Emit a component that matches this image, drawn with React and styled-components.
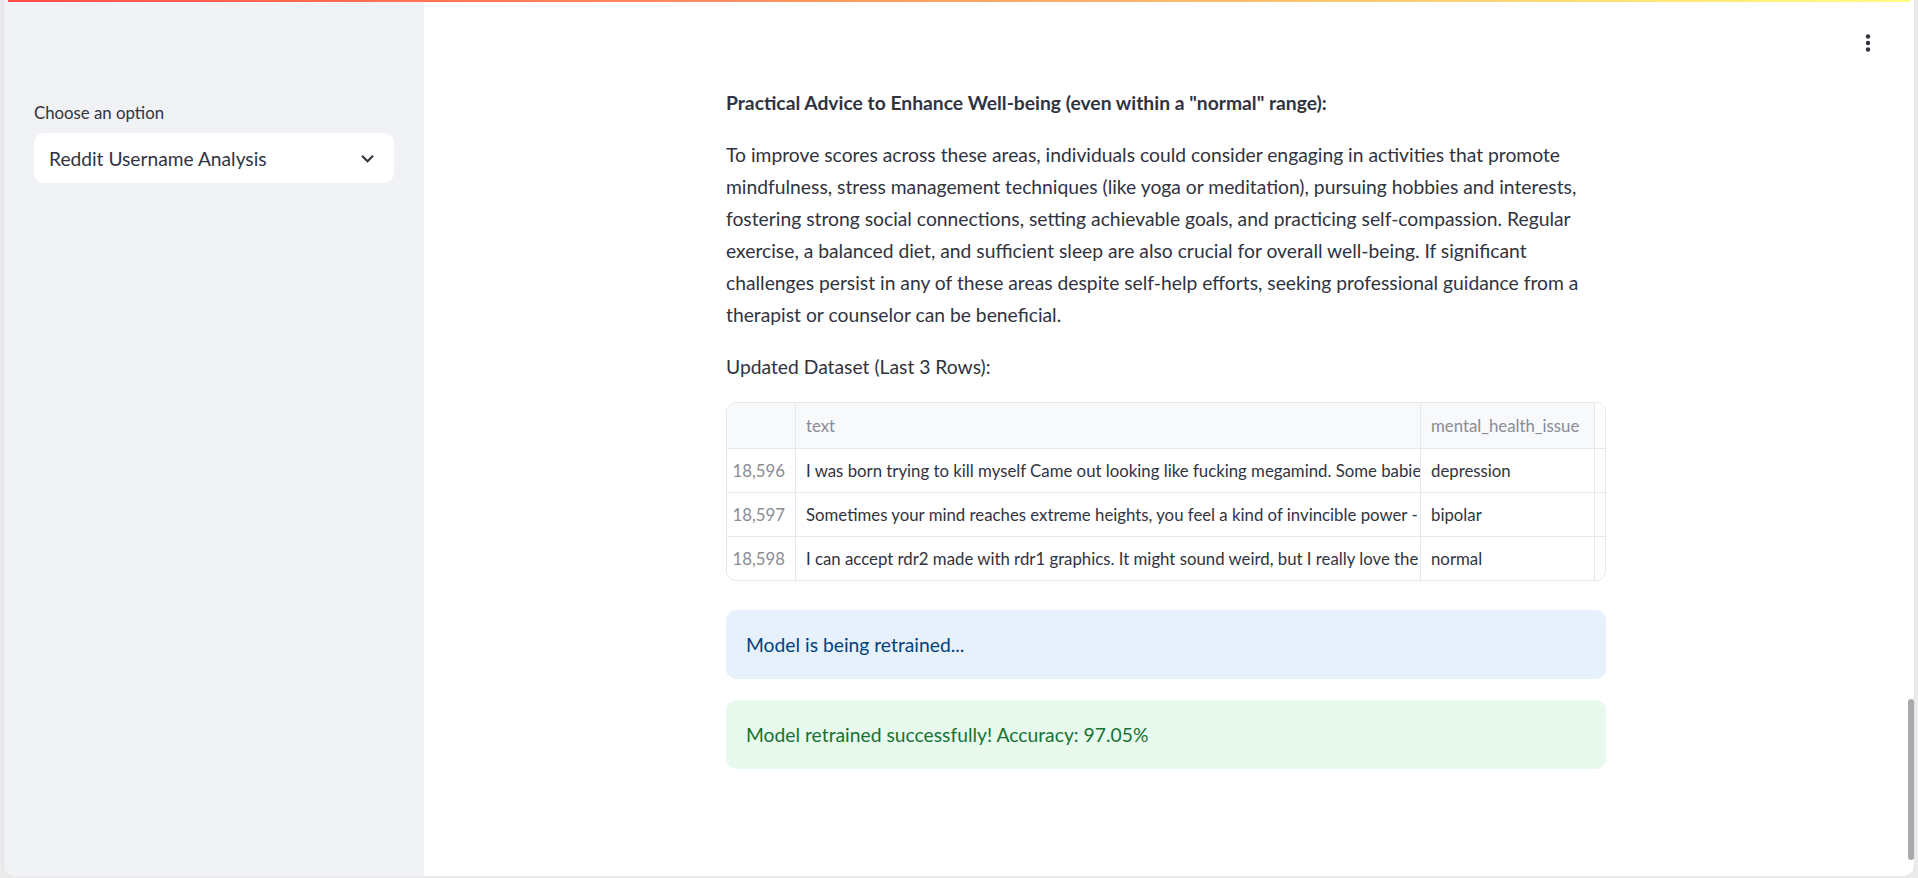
import styled, { createGlobalStyle } from "styled-components";

const GlobalStyle = createGlobalStyle`
    html, body {
        margin: 0;
        padding: 0;
        background: #ebebeb;
        font-family: Lato, "Liberation Sans", sans-serif;
        color: #31333f;
    }
    * { box-sizing: border-box; }
`;

const Window = styled.div`
    position: relative;
    height: 876px;
    margin: 0 4px;
    border-radius: 0 0 10px 10px;
    overflow: hidden;
    display: flex;
    background: #fff;
    box-shadow: 0 0 0 1px #e2e2e2;
`;

const Decoration = styled.div`
    position: absolute;
    top: 0;
    left: 4px;
    right: 4px;
    height: 2px;
    background: linear-gradient(90deg, #ff4b4b, #fffd80);
    z-index: 2;
`;

const Sidebar = styled.aside`
    width: 420px;
    flex-shrink: 0;
    background: #f0f2f6;
    padding: 98px 30px 0;
`;

const Label = styled.div`
    font-size: 16.8px;
    line-height: 30px;
    height: 30px;
    margin-bottom: 5px;
    color: #31333f;
`;

const Select = styled.div`
    height: 50px;
    background: #fff;
    border-radius: 10px;
    display: flex;
    align-items: center;
    justify-content: space-between;
    padding: 0 14px 0 15px;
    font-size: 19.2px;
    color: #31333f;
`;

const Main = styled.main`
    position: relative;
    flex: 1;
    display: flex;
`;

const Toolbar = styled.div`
    position: absolute;
    top: 30px;
    right: 36px;
    display: flex;
    gap: 8px;
`;

const MenuButton = styled.div`
    width: 20px;
    height: 26px;
    display: flex;
    align-items: center;
    justify-content: center;
`;

const Scroller = styled.div`
    flex: 1;
    display: flex;
    justify-content: center;
    padding-top: 87px;
`;

const Block = styled.div`
    width: 880px;
    display: flex;
    flex-direction: column;
`;

const Para = styled.p`
    margin: 0 0 ${({ $mb }) => $mb || 20}px;
    font-size: 19.3px;
    line-height: 32px;
    font-weight: ${({ $bold }) => ($bold ? 700 : 400)};
    color: #31333f;
`;

const TableWrap = styled.div`
    border: 1px solid #e6e7ea;
    border-radius: 10px;
    overflow: hidden;
    font-size: 16.8px;
`;

const Row = styled.div`
    display: grid;
    grid-template-columns: 69px 625px 174px 1fr;
    height: ${({ $head }) => ($head ? 45 : 44)}px;
    border-top: ${({ $head }) => ($head ? "none" : "1px solid #e6e7ea")};
`;

const Cell = styled.div`
    display: flex;
    align-items: center;
    padding: 0 10px;
    white-space: nowrap;
    overflow: hidden;
    border-right: ${({ $last }) => ($last ? "none" : "1px solid #e6e7ea")};
    background: ${({ $head, $last }) => ($head && !$last ? "#f8f9fb" : "#fff")};
    color: ${({ $muted }) => ($muted ? "#8a8c95" : "#31333f")};
    justify-content: ${({ $right }) => ($right ? "flex-end" : "flex-start")};
`;

const Alert = styled.div`
    margin-top: ${({ $mt }) => $mt}px;
    height: 69px;
    border-radius: 10px;
    padding: 0 20px;
    display: flex;
    align-items: center;
    font-size: 19.3px;
    background: ${({ $kind }) => ($kind === "success" ? "#e8f9ee" : "#e7f1fb")};
    color: ${({ $kind }) => ($kind === "success" ? "#177233" : "#004280")};
`;

const Track = styled.div`
    width: 6px;
    padding-top: 699px;
`;

const Thumb = styled.div`
    height: 161px;
    border-radius: 4px;
    background: #a8a8ad;
`;

const rows = [
    ["18,596", "I was born trying to kill myself Came out looking like fucking megamind. Some babies come out crying", "depression"],
    ["18,597", "Sometimes your mind reaches extreme heights, you feel a kind of invincible power - it feels amazing", "bipolar"],
    ["18,598", "I can accept rdr2 made with rdr1 graphics. It might sound weird, but I really love the art style", "normal"],
];

const Chevron = () => (
    <svg width="25" height="25" viewBox="0 0 24 24">
        <path d="M7.41 8.59 12 13.17l4.59-4.58L18 10l-6 6-6-6z" fill="#31333f" />
    </svg>
);

const Kebab = () => (
    <svg width="6" height="18" viewBox="0 0 6 18">
        <circle cx="3" cy="2.5" r="2.2" fill="#31333f" />
        <circle cx="3" cy="9" r="2.2" fill="#31333f" />
        <circle cx="3" cy="15.5" r="2.2" fill="#31333f" />
    </svg>
);

export default function App() {
    return (
        <>
            <GlobalStyle />
            <Window>
                <Decoration />
                <Sidebar>
                    <Label>Choose an option</Label>
                    <Select>
                        <span>Reddit Username Analysis</span>
                        <Chevron />
                    </Select>
                </Sidebar>
                <Main>
                    <Toolbar>
                        <MenuButton><Kebab /></MenuButton>
                    </Toolbar>
                    <Scroller>
                        <Block>
                            <Para $bold>Practical Advice to Enhance Well-being (even within a "normal" range):</Para>
                            <Para>
                                To improve scores across these areas, individuals could consider engaging in activities that promote
                                mindfulness, stress management techniques (like yoga or meditation), pursuing hobbies and interests,
                                fostering strong social connections, setting achievable goals, and practicing self-compassion. Regular
                                exercise, a balanced diet, and sufficient sleep are also crucial for overall well-being. If significant
                                challenges persist in any of these areas despite self-help efforts, seeking professional guidance from a
                                therapist or counselor can be beneficial.
                            </Para>
                            <Para $mb={19}>Updated Dataset (Last 3 Rows):</Para>
                            <TableWrap>
                                <Row $head>
                                    <Cell $head />
                                    <Cell $head $muted>text</Cell>
                                    <Cell $head $muted>mental_health_issue</Cell>
                                    <Cell $head $last />
                                </Row>
                                {rows.map(([idx, text, issue]) => (
                                    <Row key={idx}>
                                        <Cell $muted $right>{idx}</Cell>
                                        <Cell>{text}</Cell>
                                        <Cell>{issue}</Cell>
                                        <Cell $last />
                                    </Row>
                                ))}
                            </TableWrap>
                            <Alert $mt={29}>Model is being retrained...</Alert>
                            <Alert $mt={21} $kind="success">Model retrained successfully! Accuracy: 97.05%</Alert>
                        </Block>
                    </Scroller>
                    <Track>
                        <Thumb />
                    </Track>
                </Main>
            </Window>
        </>
    );
}
